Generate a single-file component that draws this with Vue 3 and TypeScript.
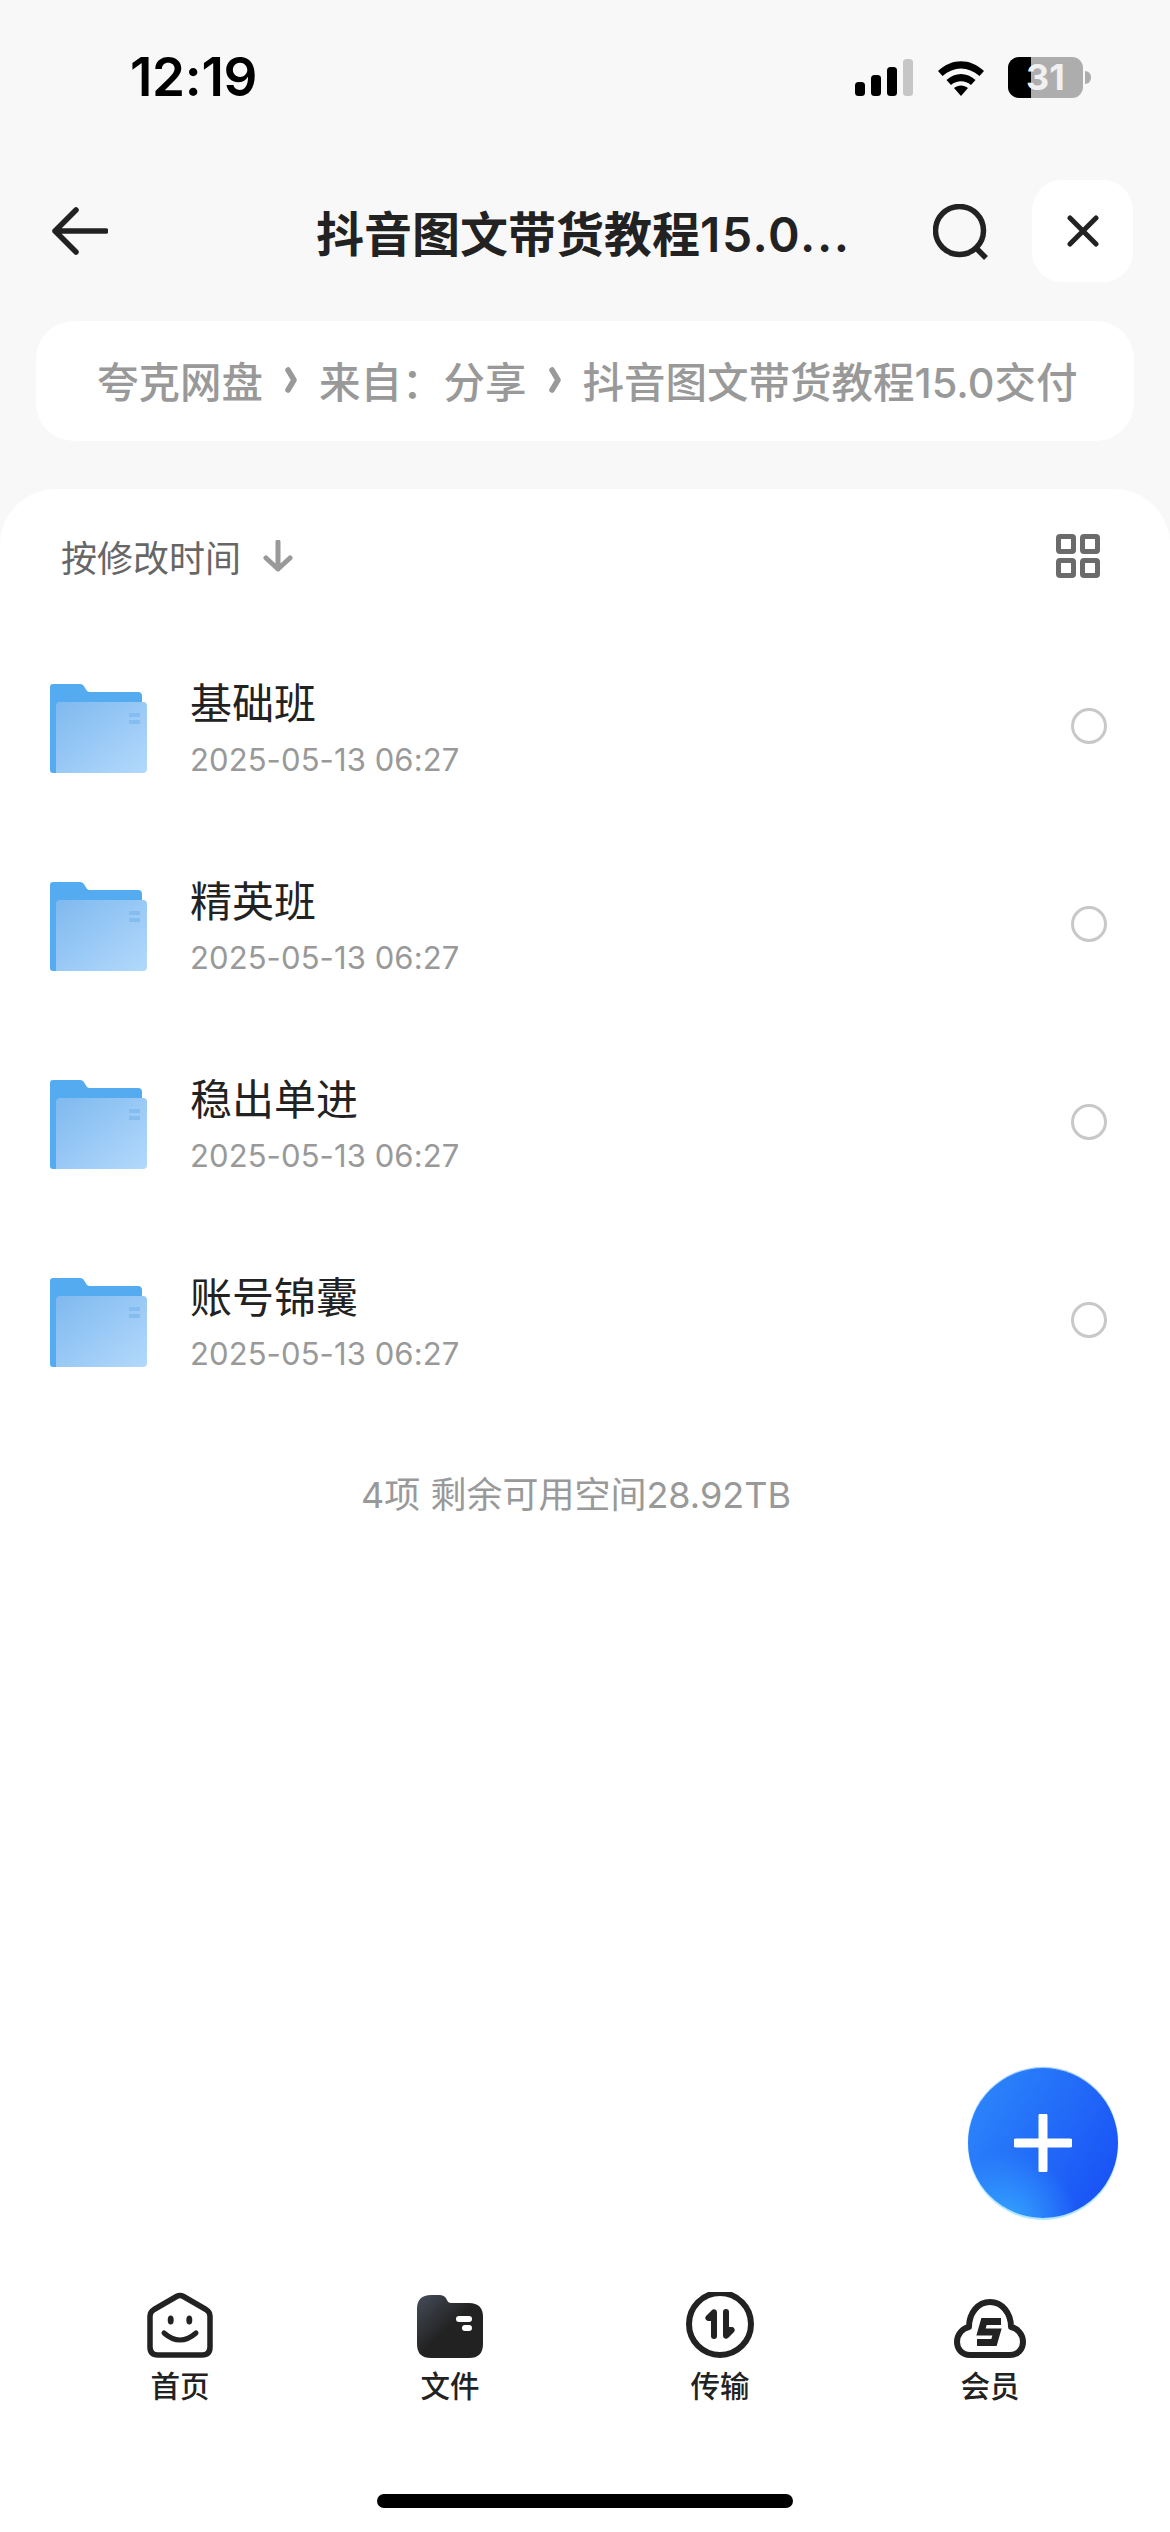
<template>
  <div class="page">
    <div class="status-bar">
      <span class="clock">12:19</span>
      <div class="status-icons">
        <svg class="signal" width="58" height="37" viewBox="0 0 58 37">
          <rect x="0" y="23" width="10" height="14" rx="3.5" fill="#000" />
          <rect x="16" y="16" width="10" height="21" rx="3.5" fill="#000" />
          <rect x="32" y="8" width="10" height="29" rx="3.5" fill="#000" />
          <rect x="48" y="0" width="10" height="37" rx="3.5" fill="#c6c6c6" />
        </svg>
        <svg class="wifi" width="50" height="37" viewBox="0 0 50 37">
          <path d="M2 12 C16 -1 34 -1 48 12 L43.5 17 C32 7 18 7 6.5 17 Z" fill="#000" />
          <path d="M10.5 21 C19 13 31 13 39.5 21 L35 26 C29 21 21 21 15 26 Z" fill="#000" />
          <path d="M18 29 C22 25.5 28 25.5 32 29 L25 37 Z" fill="#000" />
        </svg>
        <div class="battery">
          <div class="battery-body">
            <div class="battery-fill"></div>
            <span class="battery-num">31</span>
          </div>
          <div class="battery-nub"></div>
        </div>
      </div>
    </div>

    <header class="topbar">
      <svg class="back" width="56" height="48" viewBox="0 0 56 48">
        <path d="M24 3 L3 24 L24 45 M3 24 H54" fill="none" stroke="#222" stroke-width="5.5" stroke-linecap="round" stroke-linejoin="round" />
      </svg>
      <h1 class="title">抖音图文带货教程<span class="title-num">15.0...</span></h1>
      <svg class="search" width="56" height="56" viewBox="0 0 56 56">
        <circle cx="26.5" cy="26.5" r="24" fill="none" stroke="#222" stroke-width="5.5" />
        <path d="M43 44 L53 54" fill="none" stroke="#222" stroke-width="5.5" />
      </svg>
      <button class="close-btn">
        <svg width="32" height="32" viewBox="0 0 32 32">
          <path d="M3 3 L29 29 M29 3 L3 29" fill="none" stroke="#222" stroke-width="5" stroke-linecap="round" />
        </svg>
      </button>
    </header>

    <nav class="crumbs">
      <template v-for="(c, i) in crumbs" :key="c">
        <svg v-if="i > 0" class="chevron" width="12" height="26" viewBox="0 0 12 26">
          <path d="M3 3 L9 13 L3 23" fill="none" stroke="#999" stroke-width="5.5" stroke-linecap="round" stroke-linejoin="round" />
        </svg>
        <span>{{ c }}</span>
      </template>
    </nav>

    <main class="sheet">
      <div class="sort-row">
        <span class="sort-label">按修改时间</span>
        <svg class="sort-arrow" width="30" height="32" viewBox="0 0 30 32">
          <path d="M15 2 V29 M3 18 L15 29 L27 18" fill="none" stroke="#999" stroke-width="5" stroke-linejoin="round" stroke-linecap="round" />
        </svg>
        <svg class="grid-icon" width="44" height="44" viewBox="0 0 44 44">
          <rect v-for="p in gridCells" :key="p[0] + '-' + p[1]" :x="p[0]" :y="p[1]" width="15" height="15" rx="1.5" fill="none" stroke="#6b6b6b" stroke-width="5" />
        </svg>
      </div>

      <ul class="file-list">
        <li v-for="(f, i) in folders" :key="f" class="file-row">
          <svg class="folder" width="98" height="90" viewBox="0 0 98 90">
            <defs>
              <linearGradient :id="'front' + i" x1="0" y1="0" x2="1" y2="1">
                <stop offset="0" stop-color="#7fb9ef" />
                <stop offset="1" stop-color="#b3d9fc" />
              </linearGradient>
            </defs>
            <path d="M0 4 Q0 1 3 1 H30 Q33 1 34.5 4 L37 8 Q38 9 40 9 H88 Q92 9 92 13 V90 H3 Q0 90 0 87 Z" fill="#55abef" />
            <path d="M6 23 Q6 19 10 19 H93 Q97 19 97 23 V86 Q97 90 93 90 H6 Z" :fill="'url(#front' + i + ')'" />
            <rect x="79" y="30" width="11" height="4" fill="#86bdf0" />
            <rect x="79" y="37" width="11" height="4" fill="#86bdf0" />
          </svg>
          <div class="file-text">
            <div class="file-name">{{ f }}</div>
            <div class="file-date">2025-05-13 06:27</div>
          </div>
          <span class="radio"></span>
        </li>
      </ul>

      <p class="summary">4项 剩余可用空间28.92TB</p>

      <button class="fab">
        <svg width="58" height="58" viewBox="0 0 58 58">
          <path d="M29 2 V56 M2 29 H56" fill="none" stroke="#fff" stroke-width="9" stroke-linecap="round" />
        </svg>
      </button>

      <footer class="tabbar">
        <div class="tab">
          <svg width="66" height="66" viewBox="0 0 66 66">
            <path d="M29.5 4.5 Q33 2.5 36.5 4.5 L59 17.5 Q63 20 63 24 V55 Q63 63 55 63 H11 Q3 63 3 55 V24 Q3 20 7 17.5 Z" fill="none" stroke="#222" stroke-width="5.5" stroke-linejoin="round" />
            <ellipse cx="23.7" cy="28" rx="3" ry="4.5" fill="#222" />
            <ellipse cx="42.3" cy="28" rx="3" ry="4.5" fill="#222" />
            <path d="M17 41 Q33 55 49 41" fill="none" stroke="#222" stroke-width="5" stroke-linecap="round" />
          </svg>
          <span>首页</span>
        </div>
        <div class="tab">
          <svg width="66" height="66" viewBox="0 -3 66 66">
            <defs>
              <linearGradient id="fileTab" x1="0" y1="0" x2="1" y2="1">
                <stop offset="0" stop-color="#464d5a" />
                <stop offset="0.5" stop-color="#222" />
                <stop offset="1" stop-color="#222" />
              </linearGradient>
            </defs>
            <path d="M14 0 H22 Q28 0 30 5 Q31 8 34 8 H52 Q66 8 66 22 V49 Q66 63 52 63 H14 Q0 63 0 49 V14 Q0 0 14 0 Z" fill="url(#fileTab)" />
            <rect x="39" y="21" width="16" height="6" rx="3" fill="#fff" />
            <rect x="45" y="30" width="10" height="6" rx="3" fill="#fff" />
          </svg>
          <span>文件</span>
        </div>
        <div class="tab">
          <svg width="68" height="66" viewBox="0 2 68 66">
            <circle cx="34" cy="34" r="31" fill="none" stroke="#222" stroke-width="6" />
            <path d="M31 22 V46 a3 3 0 0 1 -6 0 V31 H22 a3 3 0 0 1 -2 -5 L26 20 a3 3 0 0 1 5 2 Z" fill="#222" />
            <path d="M31 22 V46 a3 3 0 0 1 -6 0 V31 H22 a3 3 0 0 1 -2 -5 L26 20 a3 3 0 0 1 5 2 Z" fill="#222" transform="rotate(180 34 34)" />
          </svg>
          <span>传输</span>
        </div>
        <div class="tab">
          <svg width="72" height="66" viewBox="0 -7 72 66">
            <path d="M16 56 C8 56 3 50 3 43 C3 35 9 29 15 28 C15 14 24 3 36 3 C48 3 57 14 57 28 C63 29 69 35 69 43 C69 50 64 56 56 56 Z" fill="none" stroke="#222" stroke-width="6" stroke-linejoin="round" />
            <path d="M47 22.5 H30 L27 33 H43 L40 43.5 H23" fill="none" stroke="#222" stroke-width="7" />
          </svg>
          <span>会员</span>
        </div>
      </footer>
      <div class="home-bar"></div>
    </main>
  </div>
</template>

<script setup lang="ts">
const crumbs: string[] = ['夸克网盘', '来自：分享', '抖音图文带货教程15.0交付']
const folders: string[] = ['基础班', '精英班', '稳出单进', '账号锦囊']
const gridCells: number[][] = [[2.5, 2.5], [26.5, 2.5], [2.5, 26.5], [26.5, 26.5]]
</script>

<style>
html, body {
  margin: 0;
  background: #f8f8f8;
}
</style>

<style scoped>
.page {
  width: 1170px;
  height: 2532px;
  display: flex;
  flex-direction: column;
  background: #f8f8f8;
  font-family: Inter, "Noto Sans CJK SC", sans-serif;
  overflow: hidden;
}

.status-bar {
  height: 156px;
  box-sizing: border-box;
  padding: 49px 0 0 130px;
  display: flex;
  align-items: flex-start;
  justify-content: space-between;
}

.clock {
  font-size: 53px;
  line-height: 56px;
  font-weight: 600;
  color: #000;
  letter-spacing: -0.3px;
}

.status-icons {
  display: flex;
  align-items: flex-start;
  padding: 8px 79px 0 0;
}

.signal { margin-top: 2px; margin-right: 23px; }
.wifi { margin-top: 2px; margin-right: 22px; }

.battery {
  display: flex;
  align-items: center;
}

.battery-body {
  position: relative;
  width: 75px;
  height: 41px;
  border-radius: 11px;
  background: #adadad;
  display: flex;
  align-items: center;
  justify-content: center;
}

.battery-fill {
  position: absolute;
  left: 0;
  top: 0;
  bottom: 0;
  width: 23px;
  border-radius: 11px 0 0 11px;
  background: #000;
}

.battery-num {
  position: relative;
  font-size: 36px;
  font-weight: 700;
  color: #f0f0f0;
  line-height: 41px;
}

.battery-nub {
  width: 6px;
  height: 13px;
  margin-left: 2px;
  border-radius: 0 7px 7px 0;
  background: #adadad;
}

.topbar {
  display: flex;
  align-items: center;
  height: 102px;
  margin-top: 24px;
  padding: 0 37px 0 52px;
}

.title {
  flex: 1;
  margin: 0 0 0 208px;
  font-size: 48px;
  font-weight: 600;
  color: #222;
  white-space: nowrap;
}

.title-num { letter-spacing: 1.6px; }

.search { margin-right: 43px; margin-top: 1px; }

.close-btn {
  width: 101px;
  height: 102px;
  border: none;
  border-radius: 30px;
  background: #fff;
  display: flex;
  align-items: center;
  justify-content: center;
  padding: 0;
}

.crumbs {
  display: flex;
  align-items: center;
  gap: 22px;
  height: 120px;
  margin: 39px 36px 0;
  padding: 0 0 2px 61px;
  box-sizing: border-box;
  border-radius: 38px;
  background: #fff;
  color: #999;
  font-size: 41.5px;
  font-weight: 500;
  white-space: nowrap;
}

.sheet {
  position: relative;
  flex: 1;
  display: flex;
  flex-direction: column;
  margin-top: 48px;
  border-radius: 56px 56px 0 0;
  background: #fff;
}

.sort-row {
  display: flex;
  align-items: center;
  height: 88px;
  padding: 23px 70px 1px 61px;
}

.sort-label {
  font-size: 36px;
  color: #666;
}

.sort-arrow { margin-left: 22px; }
.grid-icon { margin-left: auto; }

.file-list {
  list-style: none;
  margin: 26px 0 0;
  padding: 0;
}

.file-row {
  display: flex;
  align-items: center;
  height: 198px;
  padding: 0 63px 0 50px;
}

.folder { margin-top: 4px; }

.file-text {
  flex: 1;
  margin-left: 42px;
  padding-top: 4px;
}

.file-name {
  font-size: 42px;
  line-height: 52px;
  color: #222;
}

.file-date {
  margin-top: 12px;
  font-size: 31px;
  line-height: 36px;
  letter-spacing: 0.1px;
  color: #999;
}

.radio {
  width: 36px;
  height: 36px;
  box-sizing: border-box;
  border: 3px solid #c8c8c8;
  border-radius: 50%;
}

.summary {
  margin: 54px 0 0;
  padding-right: 18px;
  text-align: center;
  font-size: 36px;
  line-height: 44px;
  color: #999;
}

.fab {
  position: absolute;
  right: 52px;
  top: 1579px;
  width: 150px;
  height: 150px;
  padding: 0;
  border: none;
  border-radius: 50%;
  background:
    radial-gradient(circle at 25% 105%, #37a8ff 0%, rgba(55, 168, 255, 0) 38%),
    linear-gradient(120deg, #2e8bfb 0%, #1a55f6 85%);
  box-shadow: 0 2px 1px #a9e6ff, 0 -1px 1px #8cc4fb;
  display: flex;
  align-items: center;
  justify-content: center;
}

.tabbar {
  display: flex;
  margin-top: auto;
  padding: 0 45px;
}

.tab {
  width: 270px;
  display: flex;
  flex-direction: column;
  align-items: center;
  font-size: 29.5px;
  line-height: 34px;
  font-weight: 500;
  color: #222;
}

.tab span { margin-top: 11px; }

.home-bar {
  width: 416px;
  height: 14px;
  margin: 91px auto 24px;
  border-radius: 7px;
  background: #000;
}
</style>
